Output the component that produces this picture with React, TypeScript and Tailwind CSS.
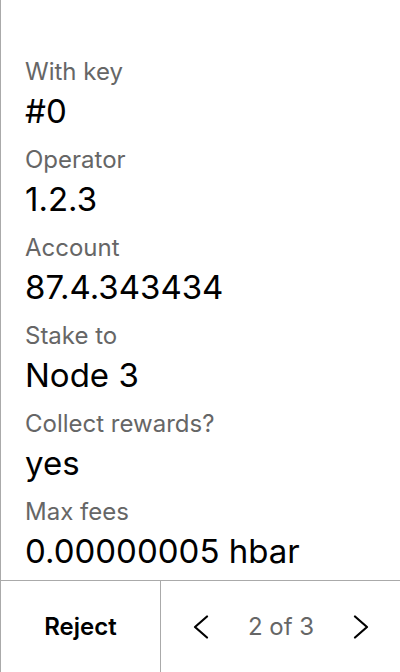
import React from "react";

const items = [
  ["With key", "#0"],
  ["Operator", "1.2.3"],
  ["Account", "87.4.343434"],
  ["Stake to", "Node 3"],
  ["Collect rewards?", "yes"],
  ["Max fees", "0.00000005 hbar"],
];

export default function App() {
  return (
    <div
      className="w-[400px] h-[672px] bg-white border-l border-[#aaaaaa] flex flex-col overflow-hidden"
      style={{ fontFamily: "Inter, 'Noto Sans', sans-serif" }}
    >
      <div className="flex-1 min-h-0 flex flex-col gap-[13px] pt-[56px] px-6">
        {items.map(([label, value]) => (
          <div key={label} className="flex flex-col shrink-0">
            <div className="text-[24px] leading-[32px] text-[#666666] whitespace-nowrap">{label}</div>
            <div className="mt-[3px] text-[33px] leading-[40px] text-black whitespace-nowrap">{value}</div>
          </div>
        ))}
      </div>
      <div className="h-[92px] shrink-0 border-t border-[#aaaaaa] flex">
        <div className="w-[160px] border-r border-[#aaaaaa] flex items-center justify-center text-[24px] font-semibold text-black">
          Reject
        </div>
        <div className="flex-1 flex items-center justify-between pl-[32px] pr-[31px]">
          <svg width="16" height="24" viewBox="0 0 16 24" fill="none" stroke="black" strokeWidth="2.2" strokeLinecap="round" strokeLinejoin="round">
            <path d="M14 1.5 L2 12 L14 22.5" />
          </svg>
          <span className="text-[24px] text-[#666666]">2 of 3</span>
          <svg width="16" height="24" viewBox="0 0 16 24" fill="none" stroke="black" strokeWidth="2.2" strokeLinecap="round" strokeLinejoin="round">
            <path d="M2 1.5 L14 12 L2 22.5" />
          </svg>
        </div>
      </div>
    </div>
  );
}
